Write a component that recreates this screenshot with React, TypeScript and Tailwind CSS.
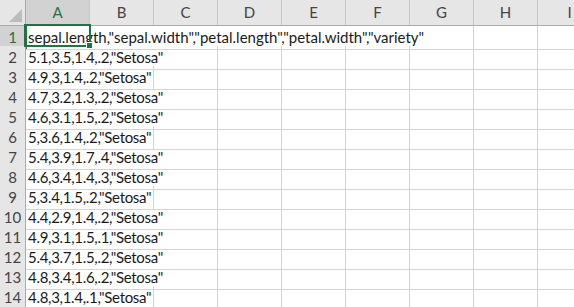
const cols = ['A', 'B', 'C', 'D', 'E', 'F', 'G', 'H', 'I'];

const rows: { text: string; span: number }[] = [
  { text: 'sepal.length,"sepal.width","petal.length","petal.width","variety"', span: 7 },
  { text: '5.1,3.5,1.4,.2,"Setosa"', span: 3 },
  { text: '4.9,3,1.4,.2,"Setosa"', span: 2 },
  { text: '4.7,3.2,1.3,.2,"Setosa"', span: 3 },
  { text: '4.6,3.1,1.5,.2,"Setosa"', span: 3 },
  { text: '5,3.6,1.4,.2,"Setosa"', span: 2 },
  { text: '5.4,3.9,1.7,.4,"Setosa"', span: 3 },
  { text: '4.6,3.4,1.4,.3,"Setosa"', span: 3 },
  { text: '5,3.4,1.5,.2,"Setosa"', span: 2 },
  { text: '4.4,2.9,1.4,.2,"Setosa"', span: 3 },
  { text: '4.9,3.1,1.5,.1,"Setosa"', span: 3 },
  { text: '5.4,3.7,1.5,.2,"Setosa"', span: 3 },
  { text: '4.8,3.4,1.6,.2,"Setosa"', span: 3 },
  { text: '4.8,3,1.4,.1,"Setosa"', span: 2 },
];

const spanClass: Record<number, string> = {
  2: 'col-span-2',
  3: 'col-span-3',
  7: 'col-span-7',
};

export default function App() {
  return (
    <div
      className="w-[574px] h-[307px] overflow-hidden bg-white text-[#1a1a1a]"
      style={{ fontFamily: 'Lato, "Liberation Sans", sans-serif' }}
    >
      <div className="w-[602px]">
        {/* column headers */}
        <div className="grid grid-cols-[26px_repeat(9,64px)] h-[26px] bg-[#e6e6e6] border-b border-[#ababab]">
          <div className="relative border-r border-[#ababab]">
            <div className="absolute right-[3px] bottom-[3px] w-0 h-0 border-l-[13px] border-l-transparent border-b-[13px] border-b-[#bcbcbc]" />
          </div>
          {cols.map((c) =>
            c === 'A' ? (
              <div
                key={c}
                className="flex items-center justify-center bg-[#d2d2d2] border-r border-[#c6c6c6] text-[15px] text-[#217346] border-b-2 border-b-[#217346] -mb-px"
              >
                {c}
              </div>
            ) : (
              <div key={c} className="flex items-center justify-center border-r border-[#c6c6c6] text-[15px] text-[#444]">
                {c}
              </div>
            )
          )}
        </div>

        {rows.map((r, i) => (
          <div key={i} className="grid grid-cols-[26px_repeat(9,64px)] h-[20px]">
            <div
              className={
                i === 0
                  ? 'flex items-center justify-center bg-[#d2d2d2] border-r-2 border-[#217346] -mr-px border-b border-b-[#c6c6c6] text-[15px] text-[#217346]'
                  : 'flex items-center justify-center bg-[#e6e6e6] border-r border-[#ababab] border-b border-b-[#c6c6c6] text-[15px] text-[#444]'
              }
            >
              {i + 1}
            </div>
            <div
              className={`relative ${spanClass[r.span]} ${i === 0 ? '' : 'tracking-[-0.3px]'} border-r border-b border-[#d4d4d4] flex items-center pl-[2px] text-[15px] whitespace-nowrap`}
            >
              {r.text}
              {i === 0 && (
                <div className="absolute left-[-2px] top-[-2px] w-[67px] h-[23px] border-2 border-[#217346]">
                  <div className="absolute right-[-4px] bottom-[-4px] w-[7px] h-[7px] bg-[#217346] border border-white" />
                </div>
              )}
            </div>
            {Array.from({ length: 9 - r.span }).map((_, j) => (
              <div key={j} className="border-r border-b border-[#d4d4d4]" />
            ))}
          </div>
        ))}
      </div>
    </div>
  );
}
